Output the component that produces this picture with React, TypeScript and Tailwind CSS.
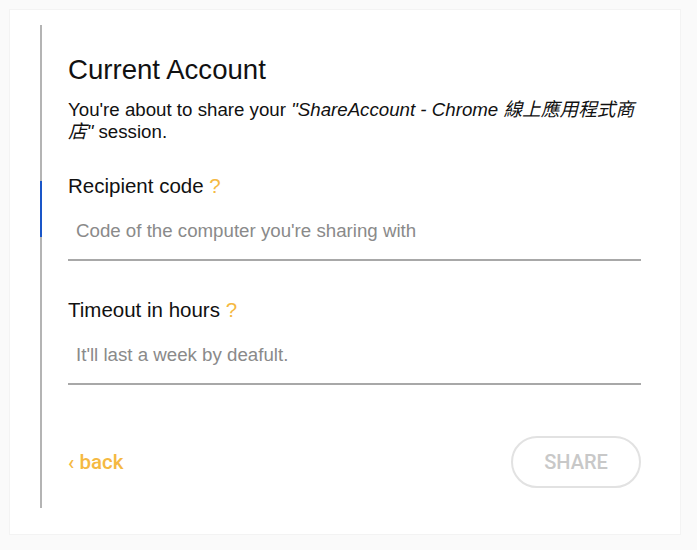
export default function App() {
  return (
    <div
      className="min-h-[550px] w-full bg-[#fafafa] p-[9px]"
      style={{ fontFamily: '"Liberation Sans", Arial, "Noto Sans CJK TC", sans-serif' }}
    >
      <div className="h-[526px] w-[672px] border border-[#f3f3f3] bg-white pl-[30px] pt-[15px]">
        <div className="relative h-[483px] border-l-2 border-[#b4b4b4] pl-[26px] pr-[39px] pt-[31px]">
          <div className="absolute -left-[2px] top-[156px] h-[56px] w-[2px] bg-[#1a56c8]" />
          <h1 className="text-[27.6px] leading-[28px] text-[#111]">Current Account</h1>
          <p className="mt-[15px] text-[18.7px] leading-[22px] text-[#111]">
            You're about to share your{" "}
            <i>"ShareAccount - Chrome 線上應用程式商店"</i> session.
          </p>

          <div className="mt-[31px]">
            <div className="text-[20.5px] leading-[24px] text-[#111]">
              Recipient code <span className="text-[#f5b942]">?</span>
            </div>
            <div className="mt-[21px] border-b-2 border-[#a8a8a8] pb-[16px] pl-[8px] text-[18.7px] leading-[24px] text-[#8a8a8a]">
              Code of the computer you're sharing with
            </div>
          </div>

          <div className="mt-[37px]">
            <div className="text-[20.5px] leading-[24px] text-[#111]">
              Timeout in hours <span className="text-[#f5b942]">?</span>
            </div>
            <div className="mt-[21px] border-b-2 border-[#a8a8a8] pb-[16px] pl-[8px] text-[18.7px] leading-[24px] text-[#8a8a8a]">
              It'll last a week by deafult.
            </div>
          </div>

          <div className="mt-[51px] flex items-center justify-between">
            <button
              className="text-[20.5px] font-medium text-[#f5b942]"
              style={{ fontFamily: "Roboto, sans-serif" }}
            >
              ‹ back
            </button>
            <button
              className="h-[52px] w-[130px] rounded-full border-2 border-[#e2e2e2] text-[20px] font-medium text-[#c8c8c8]"
              style={{ fontFamily: "Roboto, sans-serif" }}
            >
              SHARE
            </button>
          </div>
        </div>
      </div>
    </div>
  );
}
